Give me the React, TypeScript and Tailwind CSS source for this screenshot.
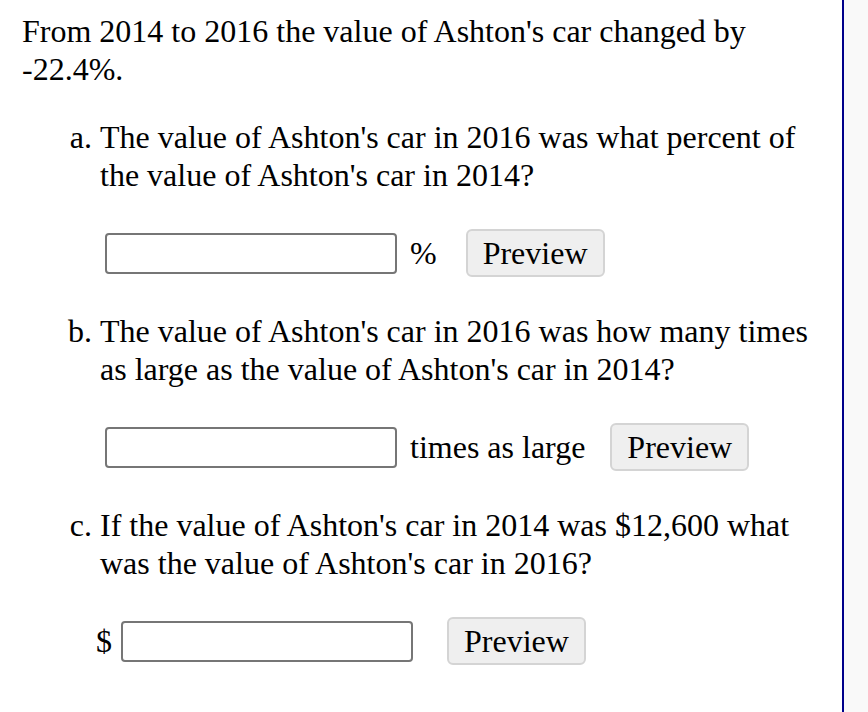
import React from 'react';

const serif = { fontFamily: '"Liberation Serif", "Times New Roman", serif' };

const Field: React.FC = () => (
  <input type="text" className="w-[292px] h-[41px] border-2 border-[#767676] rounded-[4px] bg-white outline-none" />
);

const PreviewButton: React.FC = () => (
  <button className="h-[48px] px-[15px] bg-[#efefef] border-2 border-[#d4d4d4] rounded-[6px] text-black leading-none">
    Preview
  </button>
);

const App: React.FC = () => {
  return (
    <div className="min-h-screen w-full flex bg-[#f9f9f9]" style={serif}>
      <div className="w-[844px] min-h-[712px] bg-white border-r-2 border-[#00008b] pl-[22px] pt-[12px] text-[32px] leading-[38px] text-black">
        <p>
          From 2014 to 2016 the value of Ashton's car changed by
          <br />
          -22.4%.
        </p>

        <ol className="list-[lower-alpha] pl-[78px] mt-[30px]">
          <li>
            The value of Ashton's car in 2016 was what percent of
            <br />
            the value of Ashton's car in 2014?
            <div className="flex items-center h-[48px] my-[35px] ml-[5px]">
              <Field />
              <span className="ml-[13px] mr-[29px]">%</span>
              <PreviewButton />
            </div>
          </li>
          <li>
            The value of Ashton's car in 2016 was how many times
            <br />
            as large as the value of Ashton's car in 2014?
            <div className="flex items-center h-[48px] my-[35px] ml-[5px]">
              <Field />
              <span className="ml-[13px] mr-[25px]">times as large</span>
              <PreviewButton />
            </div>
          </li>
          <li>
            If the value of Ashton's car in 2014 was $12,600 what
            <br />
            was the value of Ashton's car in 2016?
            <div className="flex items-center h-[48px] my-[35px] ml-[-4px]">
              <span className="mr-[9px]">$</span>
              <Field />
              <span className="w-[34px]"></span>
              <PreviewButton />
            </div>
          </li>
        </ol>
      </div>
    </div>
  );
};

export default App;
